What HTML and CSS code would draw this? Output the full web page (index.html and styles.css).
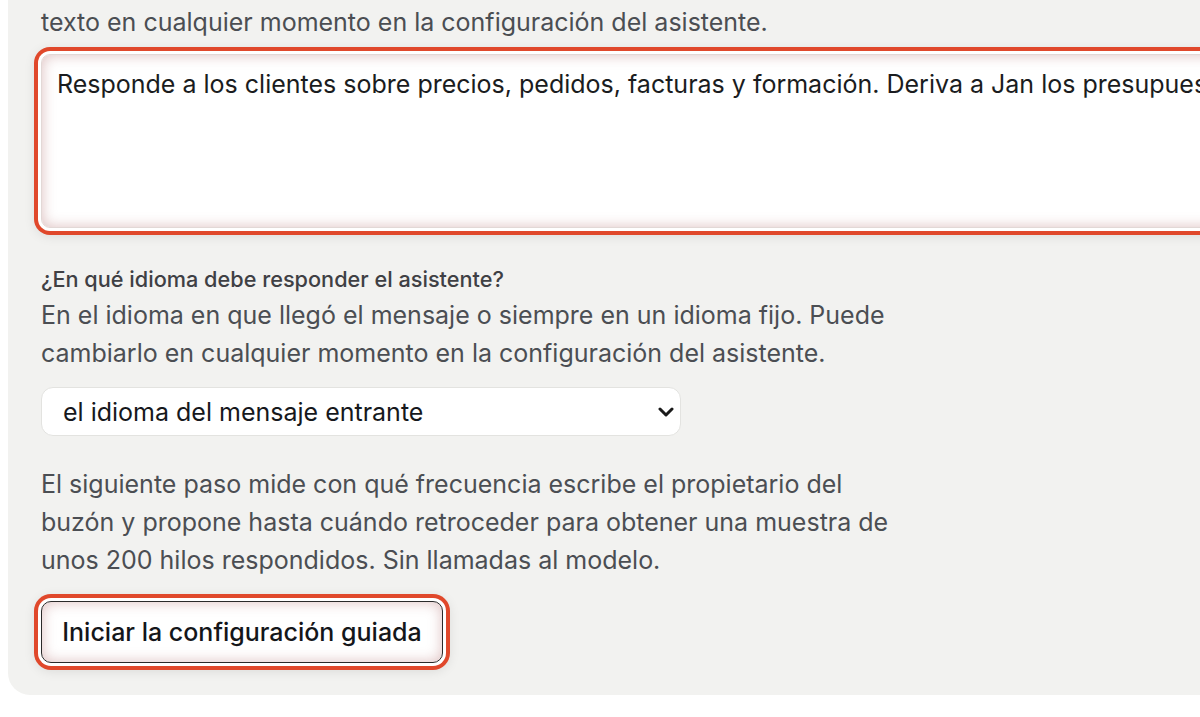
FILE: index.html
```html
<!DOCTYPE html>
<html lang="es">
<head>
<meta charset="utf-8">
<title>Configuración del asistente</title>
<link rel="stylesheet" href="styles.css">
</head>
<body>
<main class="panel">
  <p class="text lead">texto en cualquier momento en la configuración del asistente.</p>
  <textarea class="prompt focus-ring" rows="3">Responde a los clientes sobre precios, pedidos, facturas y formación. Deriva a Jan los presupuestos de proyectos grandes.</textarea>

  <label class="label">¿En qué idioma debe responder el asistente?</label>
  <p class="text desc">En el idioma en que llegó el mensaje o siempre en un idioma fijo. Puede cambiarlo en cualquier momento en la configuración del asistente.</p>
  <div class="select" role="combobox">
    <span class="select-value">el idioma del mensaje entrante</span>
    <svg class="chevron" width="16" height="10" viewBox="0 0 16 10" aria-hidden="true">
      <path d="M2 2 L8 8 L14 2" fill="none" stroke="#1a1a1a" stroke-width="3" stroke-linecap="round" stroke-linejoin="round"/>
    </svg>
  </div>

  <p class="text note">El siguiente paso mide con qué frecuencia escribe el propietario del buzón y propone hasta cuándo retroceder para obtener una muestra de unos 200 hilos respondidos. Sin llamadas al modelo.</p>
  <button class="btn focus-ring" type="button">Iniciar la configuración guiada</button>
</main>
</body>
</html>
```

FILE: styles.css
```css
html, body {
  margin: 0;
  padding: 0;
  background: #ffffff;
  overflow: hidden;
}

body {
  font-family: Inter, "Noto Sans", "Liberation Sans", sans-serif;
  width: 1200px;
  height: 717px;
}

.panel {
  margin-left: 8px;
  width: 1500px;
  background: #f2f2f0;
  border-bottom-left-radius: 22px;
  padding: 3px 33px 32px 33px;
  box-sizing: border-box;
  display: flex;
  flex-direction: column;
  align-items: flex-start;
}

.text {
  margin: 0;
  font-size: 25px;
  line-height: 38px;
  color: #4b4e53;
  max-width: 860px;
}

.focus-ring {
  box-shadow:
    inset 0 0 14px rgba(170, 95, 95, 0.4),
    0 0 0 3px #ffffff,
    0 0 0 7px #e0482b,
    0 2px 12px 6px rgba(0, 0, 0, 0.10);
}

.prompt {
  margin-top: 13px;
  width: 1300px;
  height: 174px;
  box-sizing: border-box;
  padding: 11px 15px;
  border: 1px solid #e2d8d6;
  border-radius: 9px;
  background: #ffffff;
  font-family: inherit;
  font-size: 25px;
  line-height: 37px;
  color: #1a1c20;
  resize: none;
  outline: none;
  overflow: hidden;
  white-space: nowrap;
}

.label {
  display: block;
  margin-top: 38px;
  font-size: 21.7px;
  line-height: 26px;
  font-weight: 500;
  color: #3f4044;
}

.desc {
  margin-top: 4px;
}

.select {
  margin-top: 15px;
  width: 640px;
  height: 49px;
  box-sizing: border-box;
  display: flex;
  align-items: center;
  justify-content: space-between;
  padding: 0 6px 0 21px;
  background: #ffffff;
  border: 1px solid #e3e3e0;
  border-radius: 12px;
}

.select-value {
  font-size: 25px;
  color: #16181c;
}

.chevron {
  display: block;
}

.note {
  margin-top: 29px;
}

.btn {
  margin-top: 22px;
  width: 402px;
  height: 62px;
  box-sizing: border-box;
  border: 1.5px solid #2a2a2a;
  border-radius: 10px;
  background: #ffffff;
  font-family: inherit;
  font-size: 25px;
  font-weight: 500;
  color: #14161a;
  padding: 0 20px;
  cursor: pointer;
}
```
